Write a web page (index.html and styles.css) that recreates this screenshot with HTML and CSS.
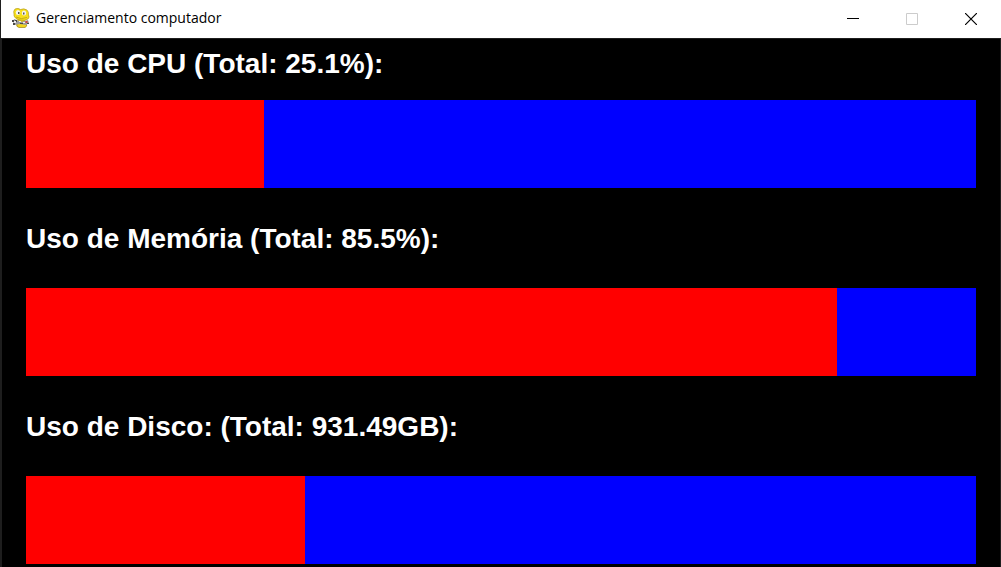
FILE: index.html
```html
<!DOCTYPE html>
<html lang="pt-BR">
<head>
<meta charset="utf-8">
<title>Gerenciamento computador</title>
<link rel="stylesheet" href="styles.css">
</head>
<body>
<div class="window">
  <header class="titlebar">
    <div class="title">
      <svg class="logo" viewBox="0 0 18 20" aria-hidden="true">
        <path d="M5 10H14L13 14L15 17L13 19H6L4 17L6 14Z" fill="#e3c81c"/>
        <path d="M5 16Q4 19 7 19.500H13Q16 18 14 16" fill="#f0d51c" stroke="#9a831a" stroke-width=".7"/>
        <path d="M2 6Q1 3 3 1Q6 -.5 8.500 1.500Q12 0 15 2Q17 4 16.500 7Q18 9 16 11Q13 13 8 12Q3 11 2 8Z" fill="#f6df1a" stroke="#a99020" stroke-width=".6"/>
        <ellipse cx="6" cy="4.500" rx="2.200" ry="2.500" fill="#f4f4f4"/>
        <ellipse cx="12" cy="5" rx="2.200" ry="2.500" fill="#f4f4f4"/>
        <path d="M6 4h1.500v2H6zM11 4.500h1.500v2H11z" fill="#555"/>
        <path d="M4 9Q9 12 15 9.500" fill="none" stroke="#c8ac16"/>
        <path d="M2 11L5 12L9 14L16 12L17 15L14 17L8 16L3 17L1 14Z" fill="#9b9b9b"/>
        <path d="M0 12h2v2H0zM1 15h2v2H1zM3 12h2v2H3zM8 15h3v1H8zM15 15h2v1h-2z" fill="#484848"/>
        <path d="M2 13h2v2H2zM7 13h2v1H7zM11 14h2v1h-2z" fill="#ececec"/>
        <path d="M13.500 13h2v2h-2z" fill="#cf4741"/>
      </svg>
      <h1 class="caption">Gerenciamento computador</h1>
    </div>
    <div class="controls">
      <button class="control" type="button" aria-label="Minimizar">
        <svg class="glyph" viewBox="0 0 12 12"><path d="M0 5.5H12" stroke="#000"/></svg>
      </button>
      <button class="control" type="button" aria-label="Maximizar" disabled>
        <svg class="glyph" viewBox="0 0 12 12"><path d="M.5 .5H11.5V11.5H.5Z" fill="none" stroke="#ccc"/></svg>
      </button>
      <button class="control" type="button" aria-label="Fechar">
        <svg class="glyph" viewBox="0 0 12 12"><path d="M0 0L12 12M12 0L0 12" stroke="#000" stroke-width="1.2"/></svg>
      </button>
    </div>
  </header>
  <main class="monitor">
    <section class="usage">
      <label class="usage-label" for="cpu">Uso de CPU (Total: 25.1%):</label>
      <progress class="bar" id="cpu" max="100" value="25"></progress>
    </section>
    <section class="usage usage-spaced">
      <label class="usage-label" for="mem">Uso de Memória (Total: 85.5%):</label>
      <progress class="bar" id="mem" max="100" value="85.4"></progress>
    </section>
    <section class="usage usage-spaced">
      <label class="usage-label" for="disk">Uso de Disco: (Total: 931.49GB):</label>
      <progress class="bar" id="disk" max="100" value="29.4"></progress>
    </section>
  </main>
</div>
</body>
</html>
```

FILE: styles.css
```css
* {
  box-sizing: border-box;
}

body {
  margin: 0;
  background: #000;
}

.window {
  display: flex;
  flex-direction: column;
  min-height: 100vh;
}

.titlebar {
  display: flex;
  height: 38px;
  padding-left: 11px;
  background: #fff;
  border-left: 1px solid #1e1e1e;
}

.title {
  display: flex;
  align-items: center;
  gap: 6px;
  padding-bottom: 2px;
}

.logo {
  width: 18px;
  height: 20px;
}

.caption {
  margin: 0;
  font: 400 14px/20px "Open Sans", "Noto Sans", sans-serif;
  color: #000;
}

.controls {
  display: flex;
  gap: 1px;
  height: 100%;
  margin-left: auto;
  margin-right: 1px;
}

.control {
  display: flex;
  align-items: center;
  justify-content: center;
  width: 58px;
  padding: 0;
  border: 0;
  background: transparent;
}

.glyph {
  width: 12px;
  height: 12px;
}

.monitor {
  display: flex;
  flex-direction: column;
  flex: 1;
  gap: 35px;
  padding: 9px 24px 4px;
  background: #000;
  border: solid #1e1e1e;
  border-width: 1px 1px 0 2px;
}

.usage {
  display: flex;
  flex-direction: column;
  gap: 20px;
}

.usage-spaced {
  gap: 33px;
}

.usage-label {
  font: 700 28px/32px "Liberation Sans", Arial, sans-serif;
  color: #fff;
}

.bar {
  display: block;
  width: 100%;
  height: 88px;
  border: 0;
  appearance: none;
  background: #00f;
}

.bar::-webkit-progress-bar {
  background: #00f;
}

.bar::-webkit-progress-value {
  background: #f00;
}
```
